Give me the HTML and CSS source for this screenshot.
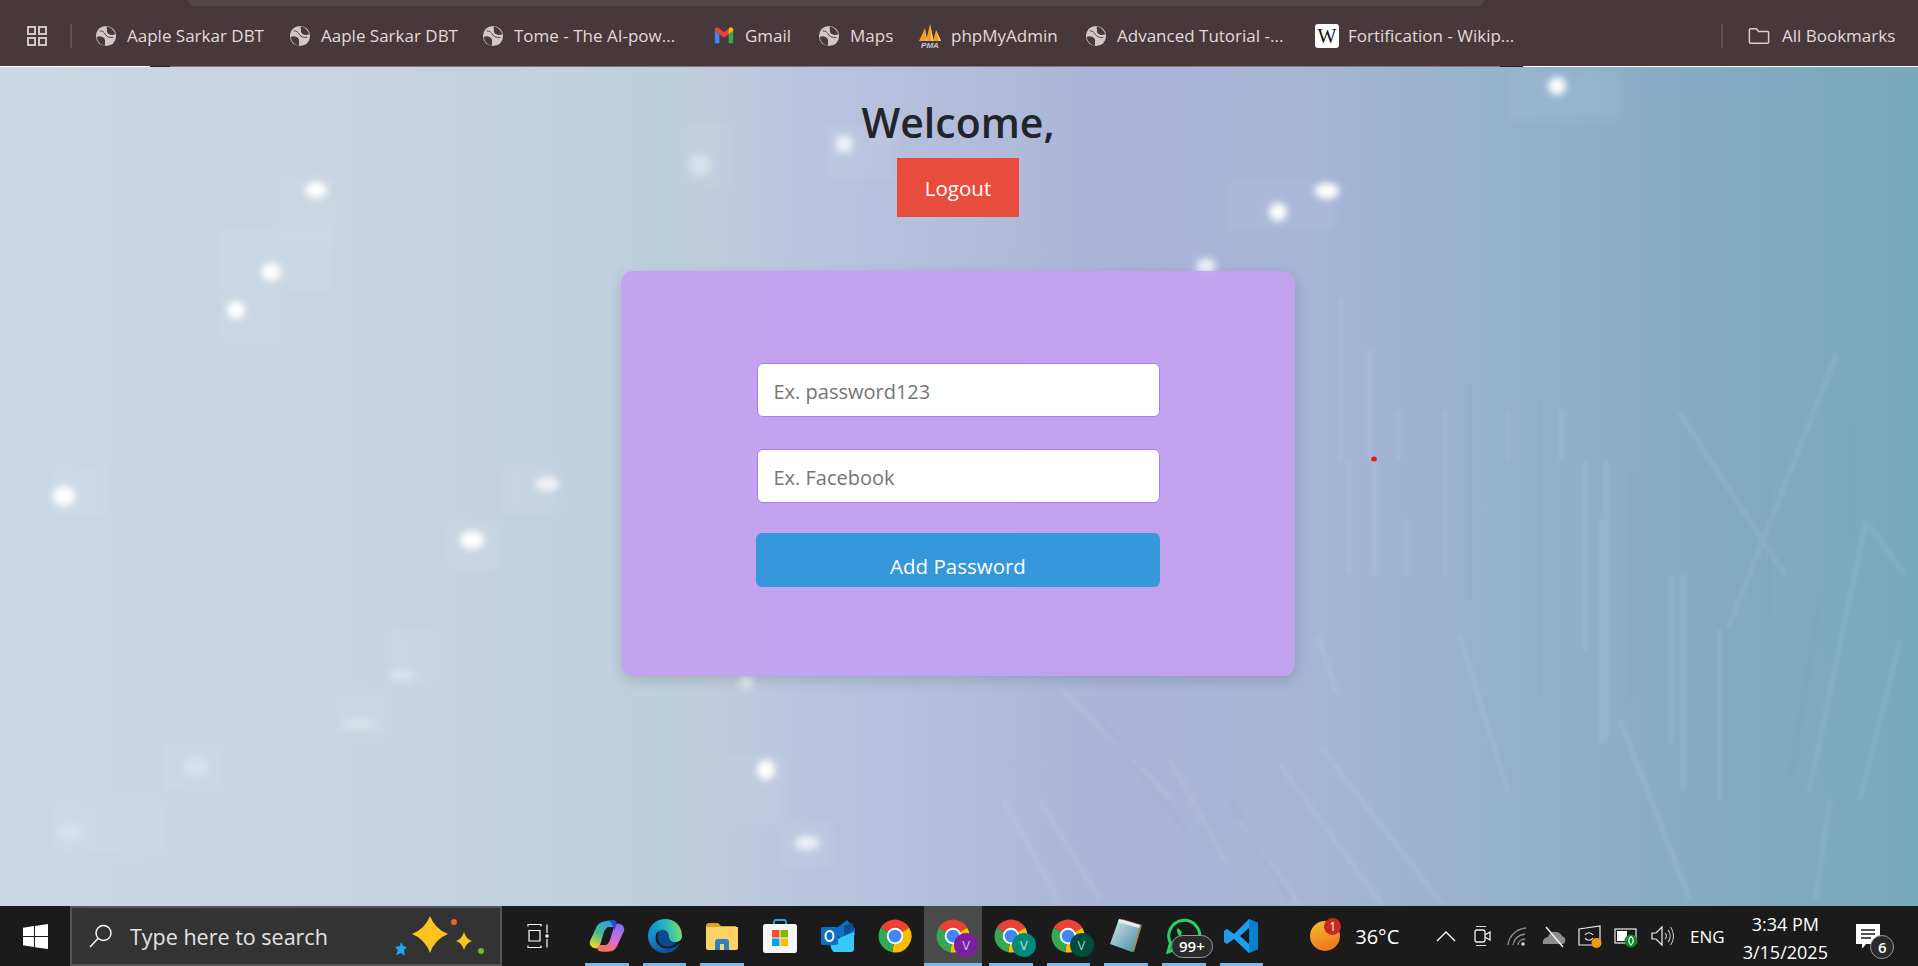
FILE: index.html
```html
<!DOCTYPE html>
<html>
<head>
    <title>Password Manager</title>
    <link rel="stylesheet" href="styles.css">
</head>
<body>
    <!-- shared icons -->
    <svg class="defs" aria-hidden="true">
        <symbol id="globe" viewBox="0 0 24 24">
            <circle cx="12" cy="12" r="11" fill="#cfc9ca"/>
            <path d="M12.5 1.5C17 2 21 5.5 22 10C19 11.5 15 11 13.5 8.5C12.5 6.5 13.5 4 12.5 1.5z" fill="#47383b"/>
            <path d="M2 13C5 11.5 9 12.5 10.5 15C11.5 17.5 10.5 20 11 22.5C6.5 22 2.5 18 2 13z" fill="#47383b"/>
            <path d="M5 6.5C8 6 10 8 11.5 10.5C13 13 16 14 20 13.5" fill="none" stroke="#47383b" stroke-width="1"/>
        </symbol>
        <symbol id="chrome" viewBox="0 0 48 48">
            <path d="M24 24L5 13A22 22 0 0 1 43 13z" fill="#ea4335"/>
            <path d="M24 24L43 13A22 22 0 0 1 20.2 45.7z" fill="#fbbc04"/>
            <path d="M24 24L20.2 45.7A22 22 0 0 1 5 13z" fill="#34a853"/>
            <circle cx="24" cy="24" r="11" fill="#fff"/>
            <circle cx="24" cy="24" r="8.5" fill="#4285f4"/>
        </symbol>
    </svg>

    <header class="top-bar">
        <div class="tab-strip"></div>
        <nav class="bookmarks">
            <svg class="apps-icon" viewBox="0 0 20 20"><path d="M1 1h7v7H1zM12 1h7v7h-7zM1 12h7v7H1zM12 12h7v7h-7z" fill="none" stroke="#cfc6c6" stroke-width="2"/></svg>
            <span class="bar-sep"></span>
            <a class="mark mark-1"><svg class="fav"><use href="#globe"/></svg>Aaple Sarkar DBT</a>
            <a class="mark mark-2"><svg class="fav"><use href="#globe"/></svg>Aaple Sarkar DBT</a>
            <a class="mark mark-3"><svg class="fav"><use href="#globe"/></svg>Tome - The AI-pow...</a>
            <a class="mark mark-4">
                <svg class="fav" viewBox="0 0 24 24">
                    <path d="M2 6v14h5V10z" fill="#4285f4"/>
                    <path d="M22 6v14h-5V10z" fill="#34a853"/>
                    <path d="M2 6l10 8 10-8v-1c0-2-2-3-4-2l-6 5-6-5C4 2 2 3 2 5z" fill="#ea4335"/>
                    <path d="M17 6l1-3c2-1 4 0 4 2v1l-5 4z" fill="#fbbc04"/>
                </svg>Gmail</a>
            <a class="mark mark-5"><svg class="fav"><use href="#globe"/></svg>Maps</a>
            <a class="mark mark-6">
                <svg class="fav fav-pma" viewBox="0 0 24 24">
                    <path d="M1 17L7 4l2 13zM8 17L12 0l3.5 17zM15 17l3-11 5 11z" fill="#f29b26"/>
                    <path d="M12 0l3.5 17h-2zM7 4l2 13H8zM18 6l5 11h-2z" fill="#f9d27c"/>
                    <text class="pma" x="12" y="23.5" text-anchor="middle">PMA</text>
                </svg>phpMyAdmin</a>
            <a class="mark mark-7"><svg class="fav"><use href="#globe"/></svg>Advanced Tutorial -...</a>
            <a class="mark mark-8"><span class="wiki">W</span>Fortification - Wikip...</a>
            <span class="bar-sep bar-sep-right"></span>
            <a class="mark mark-all">
                <svg class="fav" viewBox="0 0 24 24"><path d="M1.5 5.5a1.5 1.5 0 0 1 1.5-1.5h6l2.500 3h9.500a1.500 1.500 0 0 1 1.500 1.500v10a1.500 1.500 0 0 1-1.500 1.500h-18a1.500 1.500 0 0 1-1.500-1.500z" fill="none" stroke="#d8d0d0" stroke-width="1.6"/></svg>All Bookmarks</a>
        </nav>
        <div class="bar-edge"></div>
    </header>

    <main class="page">
        <!-- wallpaper -->
        <svg class="wallpaper" viewBox="0 67 1918 839" aria-hidden="true">
            <defs>
                <linearGradient id="sky" x1="0" x2="1" y1="0" y2="0">
                    <stop offset="0" stop-color="#ccd9e5"/>
                    <stop offset=".06" stop-color="#c9d6e2"/>
                    <stop offset=".2" stop-color="#c7d3df"/>
                    <stop offset=".32" stop-color="#bfd0de"/>
                    <stop offset=".35" stop-color="#bccfdc"/>
                    <stop offset=".37" stop-color="#c0cbdc"/>
                    <stop offset=".42" stop-color="#b9c5de"/>
                    <stop offset=".58" stop-color="#abb4d9"/>
                    <stop offset=".68" stop-color="#a6b5d6"/>
                    <stop offset=".78" stop-color="#96b1cd"/>
                    <stop offset=".91" stop-color="#82aac2"/>
                    <stop offset="1" stop-color="#78a8bb"/>
                </linearGradient>
                <filter id="soft"><feGaussianBlur stdDeviation="3.5"/></filter>
                <filter id="haze"><feGaussianBlur stdDeviation="1.8"/></filter>
            </defs>
            <rect x="0" y="67" width="1918" height="839" fill="url(#sky)"/>
            <g fill="#fff" fill-opacity=".06" filter="url(#soft)">
                <rect x="280" y="176" width="56" height="70"/><rect x="222" y="230" width="110" height="60"/>
                <rect x="222" y="296" width="56" height="45"/><rect x="52" y="465" width="56" height="52"/>
                <rect x="445" y="520" width="56" height="50"/><rect x="502" y="465" width="56" height="50"/>
                <rect x="388" y="630" width="50" height="55"/><rect x="335" y="690" width="55" height="45"/>
                <rect x="165" y="745" width="55" height="45"/><rect x="55" y="800" width="110" height="55"/>
                <rect x="1510" y="70" width="110" height="50"/><rect x="1230" y="180" width="105" height="50"/>
                <rect x="680" y="125" width="50" height="60"/><rect x="826" y="125" width="70" height="55"/>
                <rect x="728" y="756" width="56" height="68"/><rect x="782" y="822" width="50" height="45"/>
            </g>
            <g fill="#fff" filter="url(#soft)">
                <ellipse cx="316" cy="190" rx="11" ry="8"/><ellipse cx="271" cy="272" rx="10" ry="9"/>
                <ellipse cx="236" cy="310" rx="9" ry="9"/><ellipse cx="64" cy="496" rx="11" ry="10"/>
                <ellipse cx="472" cy="540" rx="12" ry="9"/><ellipse cx="547" cy="484" rx="12" ry="7" fill-opacity=".75"/>
                <ellipse cx="1557" cy="86" rx="9" ry="9"/><ellipse cx="1327" cy="191" rx="12" ry="8"/>
                <ellipse cx="1278" cy="212" rx="9" ry="9"/><ellipse cx="766" cy="770" rx="9" ry="10"/>
                <ellipse cx="807" cy="843" rx="12" ry="7" fill-opacity=".75"/><ellipse cx="844" cy="144" rx="9" ry="9" fill-opacity=".75"/>
                <ellipse cx="1206" cy="267" rx="10" ry="9" fill-opacity=".8"/><ellipse cx="746" cy="682" rx="8" ry="6" fill-opacity=".6"/>
                <ellipse cx="700" cy="165" rx="11" ry="11" fill-opacity=".35"/><ellipse cx="635" cy="312" rx="9" ry="12" fill-opacity=".35"/>
                <ellipse cx="740" cy="567" rx="9" ry="9" fill-opacity=".3"/><ellipse cx="402" cy="675" rx="12" ry="6" fill-opacity=".3"/>
                <ellipse cx="359" cy="724" rx="18" ry="6" fill-opacity=".25"/><ellipse cx="196" cy="767" rx="12" ry="10" fill-opacity=".25"/>
                <ellipse cx="71" cy="832" rx="12" ry="9" fill-opacity=".2"/>
            </g>
            <g stroke="#fff" stroke-opacity=".07" stroke-width="5" fill="none" filter="url(#haze)">
                <path d="M1341 298V461M1370 350V461M1398 410V461M1445 410V575M1508 410V461M1561 410V461"/>
                <path d="M1349 461V575M1374 461V575M1406 520V575M1585 461V650M1606 461V740"/>
                <path d="M1601 520V743M1671 575V743M1683 575V790M1720 630V800"/>
                <path d="M1866 521L1809 792M1866 521L1905 575M1837 353L1728 629M1679 412L1785 575"/>
                <path d="M1459 634L1508 792M1317 634L1337 694M1620 720L1690 900M1900 640L1860 800M1830 800L1815 900"/>
                <path d="M1280 765L1382 905M1321 748L1443 905M1240 820L1300 905"/>
                <path d="M1060 687L1170 797M1170 760L1225 860M1003 800L1060 903M1040 800L1100 900"/>
            </g>
            <g stroke="#5f7f9c" stroke-opacity=".05" stroke-width="5" fill="none" filter="url(#haze)">
                <path d="M1470 380V600M1540 400V700M1630 470V700M1770 480V620M1820 600L1790 780M1850 420V540"/>
                <path d="M1100 720L1185 830M1230 800L1290 900"/>
            </g>
            <ellipse cx="1374" cy="459" rx="2.8" ry="2.5" fill="#e8141c"/>
        </svg>

        <h1 class="welcome">Welcome,</h1>
        <button class="logout-btn">Logout</button>

        <form class="pass-card">
            <input class="pass-input" type="text" placeholder="Ex. password123">
            <input class="pass-input" type="text" placeholder="Ex. Facebook">
            <button class="add-btn" type="button">Add Password</button>
        </form>
    </main>

    <footer class="taskbar">
        <div class="start">
            <svg class="start-icon" viewBox="0 0 24 24"><path d="M0 3.5L10.5 2V11.5H0zM11.5 1.8L24 0V11.5H11.5zM0 12.5H10.5V22L0 20.5zM11.5 12.5H24V24L11.5 22.2z" fill="#fff"/></svg>
        </div>
        <div class="search">
            <svg class="search-icon" viewBox="0 0 24 24"><circle cx="14.5" cy="9" r="7.5" fill="none" stroke="#fff" stroke-width="1.4"/><path d="M9 14.5L1 23" stroke="#fff" stroke-width="1.4"/></svg>
            <span class="search-text">Type here to search</span>
            <svg class="sparkles" viewBox="0 0 90 44">
                <path d="M36 2Q41 15 54 20Q41 25 36 39Q31 25 18 20Q31 15 36 2z" fill="#fdc41f"/>
                <path d="M70 18Q72 25 78 27Q72 29 70 36Q68 29 62 27Q68 25 70 18z" fill="#fdc41f"/>
                <path d="M7 28l2 4 4 1-3 3 1 6-4-3-5 2 2-5-3-3 5-1z" fill="#1ea7f2"/>
                <circle cx="60" cy="8" r="3" fill="#f0651f"/>
                <circle cx="87" cy="37" r="3" fill="#7db33a"/>
            </svg>
        </div>
        <div class="task-view">
            <svg class="task-view-icon" viewBox="0 0 24 24"><path d="M1 2.5V.5H14V2.5M1 21.5V23.5H14V21.5M2 6.5H13V17H2zM20 .5V9M20 15V23.5" fill="none" stroke="#fff" stroke-width="1.2"/><rect x="18.5" y="10.5" width="3" height="3" fill="#fff"/></svg>
        </div>

        <div class="apps">
            <div class="app on">
                <svg class="app-icon" viewBox="0 0 36 36">
                    <defs>
                        <linearGradient id="cp1" x1=".7" y1="0" x2=".2" y2="1"><stop offset="0" stop-color="#2f9df0"/><stop offset=".5" stop-color="#3fc08a"/><stop offset="1" stop-color="#f6d72f"/></linearGradient>
                        <linearGradient id="cp2" x1=".7" y1="0" x2=".3" y2="1"><stop offset="0" stop-color="#8a6cf0"/><stop offset=".55" stop-color="#d86fd8"/><stop offset="1" stop-color="#f8744a"/></linearGradient>
                    </defs>
                    <path d="M13 4C15 3 24 2 26 3C28 4 28 8 25 9L20 9C18 9 16 11 15 14L11 27C10 30 8 31 5 30C2 29 0 26 1 23L7 10C8 7 10 5 13 4z" fill="url(#cp1)"/>
                    <path d="M23 33C21 34 12 34 10 33C8 32 8 28 11 27L16 27C18 27 20 25 21 22L25 9C26 6 28 5 31 6C34 7 36 10 35 13L29 26C28 29 26 32 23 33z" fill="url(#cp2)"/>
                    <path d="M20 3L24 2.5C27 2.5 28 5 27.5 7L25 13C24.5 9 23 5 20 3z" fill="#1f4fd0"/>
                </svg>
            </div>
            <div class="app on">
                <svg class="app-icon" viewBox="0 0 36 36">
                    <defs>
                        <linearGradient id="ed1" x1="0" y1=".6" x2="1" y2=".5"><stop offset="0" stop-color="#0f86c8"/><stop offset=".55" stop-color="#27b8c0"/><stop offset="1" stop-color="#7ce06a"/></linearGradient>
                        <linearGradient id="ed2" x1="0" y1="0" x2=".7" y2="1"><stop offset="0" stop-color="#1f9be0"/><stop offset="1" stop-color="#0b4f96"/></linearGradient>
                    </defs>
                    <path d="M18 1C28 1 35 8 35 18C35 22 32 24 28 24C24 24 22 22 22 19C22 15 18 12 13 13C7 14 2 19 1 18C1 8 9 1 18 1z" fill="url(#ed1)"/>
                    <path d="M1 18C3 12 9 10 14 12C9 13 8 18 9 23C11 29 18 32 25 30C29 29 31 27 33 25C30 32 24 35 18 35C8 35 1 27 1 18z" fill="url(#ed2)"/>
                    <path d="M14 12C18 11 22 14 22 19C21 23 25 25 29 24C27 28 21 30 16 28C11 25 8 16 14 12z" fill="#0a4a92"/>
                </svg>
            </div>
            <div class="app on">
                <svg class="app-icon" viewBox="0 0 36 36">
                    <path d="M2 8c0-2 1-3 3-3h9l3 3h15v8H2z" fill="#e0a01f"/>
                    <path d="M2 9h32v21c0 1-1 2-2 2H4c-1 0-2-1-2-2z" fill="#fdd367"/>
                    <path d="M11 32V24c0-2 1-3 3-3h8c2 0 3 1 3 3v8h-5v-6h-4v6z" fill="#2f7fc4"/>
                </svg>
            </div>
            <div class="app">
                <svg class="app-icon" viewBox="0 0 36 36">
                    <path d="M12 8V4c0-1 1-2 2-2h8c1 0 2 1 2 2v4" fill="none" stroke="#2ba8e8" stroke-width="1.8"/>
                    <rect x="1" y="6" width="34" height="29" rx="2.5" fill="#f6f6f6"/>
                    <rect x="10" y="12" width="7.5" height="7.5" fill="#f25022"/><rect x="18.5" y="12" width="7.5" height="7.5" fill="#7fba00"/>
                    <rect x="10" y="20.5" width="7.5" height="7.5" fill="#00a4ef"/><rect x="18.5" y="20.5" width="7.5" height="7.5" fill="#ffb900"/>
                </svg>
            </div>
            <div class="app">
                <svg class="app-icon" viewBox="0 0 36 36">
                    <path d="M14 12L27 2l8 9v6l-12 7z" fill="#0f6fc6"/>
                    <path d="M24 8l8-3 3 6-11 7z" fill="#0a4f96"/>
                    <path d="M10 24l24-10v17c0 2-1 3-3 3H15c-2 0-3-2-4-4z" fill="#38c8f5"/>
                    <rect x="1" y="9" width="17" height="18" rx="2" fill="#0f6fc6"/>
                    <ellipse cx="9.5" cy="18" rx="4" ry="5" fill="none" stroke="#fff" stroke-width="2"/>
                </svg>
            </div>
            <div class="app"><svg class="app-icon"><use href="#chrome"/></svg></div>
            <div class="app on active"><svg class="app-icon"><use href="#chrome"/></svg><span class="profile profile-purple">V</span></div>
            <div class="app on"><svg class="app-icon"><use href="#chrome"/></svg><span class="profile profile-teal">V</span></div>
            <div class="app on"><svg class="app-icon"><use href="#chrome"/></svg><span class="profile profile-dark">V</span></div>
            <div class="app on">
                <svg class="app-icon" viewBox="0 0 36 36">
                    <defs>
                        <linearGradient id="np" x1="0" y1="0" x2="1" y2="1"><stop offset="0" stop-color="#d6e8ee"/><stop offset="1" stop-color="#3f8aa0"/></linearGradient>
                    </defs>
                    <path d="M14 1l20 6-8 27-3-1z" fill="#9c8a52"/>
                    <path d="M11 1l21 6-8 27L2 26z" fill="url(#np)"/>
                    <path d="M11 1l21 6-1 3-21-6z" fill="#e9eef0"/>
                </svg>
            </div>
            <div class="app on">
                <svg class="app-icon" viewBox="0 0 36 36"><path d="M2 34l2.5-9A15.500 15.500 0 1 1 10 31z" fill="none" stroke="#25d366" stroke-width="3"/><path d="M12 10c-2 2-1 6 3 10s7 5 9 3l-3-4-2 1c-2-1-3-3-4-4l1-2z" fill="#25d366"/></svg>
                <span class="count-badge">99+</span>
            </div>
            <div class="app on">
                <svg class="app-icon" viewBox="0 0 36 36">
                    <path d="M26 1l9 4v26l-9 4-15-14-7 5-3-2V13l3-2 7 5zM26 10l-9 8 9 8z" fill="#1f9cf0"/>
                    <path d="M26 1l9 4v26l-9 4z" fill="#0b7fcf"/>
                </svg>
            </div>
        </div>

        <div class="weather">
            <span class="sun"><span class="sun-badge">1</span></span>
            <span class="temp">36°C</span>
        </div>

        <div class="tray">
            <svg class="tray-icon" viewBox="0 0 24 24"><path d="M3 17L12 8l9 9" fill="none" stroke="#fff" stroke-width="1.4"/></svg>
            <svg class="tray-icon" viewBox="0 0 24 24"><path d="M6 2.5h10M6 21.5h10" stroke="#ddd" fill="none"/><rect x="5" y="6" width="10" height="12" rx="2" fill="none" stroke="#eee" stroke-width="1.3"/><path d="M15 11l5-3v8l-5-3" fill="none" stroke="#eee" stroke-width="1.3"/></svg>
            <svg class="tray-icon" viewBox="0 0 24 24"><path d="M2 21C3 12 10 5 20 4M7 21c1-6 5-10 12-11M12 21c0-3 3-6 7-6" fill="none" stroke="#8c8c8c" stroke-width="1.3"/><circle cx="17" cy="20" r="1.7" fill="#ddd"/></svg>
            <svg class="tray-icon" viewBox="0 0 24 24"><path d="M1 20c-1-4 2-7 5-7 1-4 5-6 8-5 3 0 5 2 6 4 3 1 4 3 3 6-1 2-2 2-3 2z" fill="#8d8d8d"/><path d="M4 3l17 20" stroke="#f2f2f2" stroke-width="1.5"/></svg>
            <svg class="tray-icon" viewBox="0 0 24 24"><path d="M1 5L22 2v19H1z" fill="none" stroke="#eee" stroke-width="1.2"/><path d="M7 11c2-3 6-3 8 0M15 14c-2 3-6 3-8 0" fill="none" stroke="#eee" stroke-width="1.2"/><circle cx="18.5" cy="19" r="5" fill="#f59a0c"/></svg>
            <svg class="tray-icon" viewBox="0 0 24 24"><rect x="1" y="5" width="21" height="14" fill="none" stroke="#eee" stroke-width="1.2"/><rect x="3" y="7" width="10" height="10" fill="#fff"/><circle cx="17" cy="17" r="6.5" fill="#0c8a2c"/><path d="M17 12.5c3 2 3 6 0 8.5-3-2.5-3-6.5 0-8.5z" fill="none" stroke="#fff" stroke-width="1.2"/></svg>
            <svg class="tray-icon" viewBox="0 0 24 24"><path d="M2 9h4l6-6v18l-6-6H2z" fill="none" stroke="#eee" stroke-width="1.2"/><path d="M15 9c2 2 2 4 0 6M18 6c3 3 3 9 0 12M20.5 3c4 5 4 13 0 18" fill="none" stroke="#bbb" stroke-width="1.1"/></svg>
        </div>
        <span class="lang">ENG</span>
        <div class="clock"><span>3:34 PM</span><span>3/15/2025</span></div>
        <div class="notify">
            <svg class="notify-icon" viewBox="0 0 24 24"><path d="M0 0H24V20H10L6 25V20H0z" fill="#fff"/><path d="M5 6H19M5 10H19M5 14H15" stroke="#1b1b1b" stroke-width="1.5"/></svg>
            <span class="notify-count">6</span>
        </div>
    </footer>
</body>
</html>
```

FILE: styles.css
```css
/* Base */
html, body {
    margin: 0;
    height: 966px;
    overflow: hidden;
}

body {
    display: flex;
    flex-direction: column;
    font-family: "Open Sans", "Noto Sans", sans-serif;
}

.defs {
    width: 0;
    height: 0;
    display: block;
}

/* Browser bookmarks bar */
.top-bar {
    background-color: #47383b;
    flex-shrink: 0;
}

.tab-strip {
    height: 6px;
    margin: 0 433px 0 187px;
    background-color: #524747;
    clip-path: polygon(0 0, 100% 0, 99.6% 100%, 0.4% 100%);
}

.bookmarks {
    height: 60px;
    display: flex;
    align-items: center;
    padding-left: 27px;
    color: #e2dada;
    font-size: 17px;
    line-height: 22px;
    white-space: nowrap;
}

.apps-icon {
    width: 20px;
    height: 20px;
}

.bar-sep {
    width: 2px;
    height: 24px;
    margin-left: 23px;
    background-color: #5f5154;
}

.bar-sep-right {
    margin-left: 0;
}

.mark {
    display: flex;
    align-items: center;
    gap: 10px;
    margin-bottom: 1px;
}

.fav {
    width: 22px;
    height: 22px;
    flex-shrink: 0;
}

.fav-pma {
    width: 24px;
    height: 24px;
    margin-right: -1px;
}

.pma {
    font-family: "Liberation Sans", sans-serif;
    font-size: 8px;
    font-weight: bold;
    font-style: italic;
    fill: #c9c9dd;
}

.wiki {
    width: 24px;
    height: 24px;
    margin-left: -1px;
    margin-right: -1px;
    border-radius: 3px;
    background-color: #fff;
    color: #111;
    font-family: "Liberation Serif", serif;
    font-size: 20px;
    line-height: 24px;
    text-align: center;
    flex-shrink: 0;
}

/* each bookmark keeps its slot on the bar */
.mark-1 { margin-left: 23px; width: 194px; }
.mark-2 { width: 193px; }
.mark-3 { width: 231px; }
.mark-4 { width: 105px; }
.mark-5 { width: 100px; }
.mark-6 { width: 167px; }
.mark-7 { width: 231px; }
.mark-8 { width: 405px; }
.mark-all { margin-left: 25px; gap: 12px; }

.bar-edge {
    height: 1px;
    background: linear-gradient(90deg, #fff 150px, #222 150px, #222 170px, #7d7580 170px, #7d7580 1500px, #222 1500px, #222 1523px, #fff 1523px);
}

/* Page */
.page {
    position: relative;
    flex: 1;
    display: flex;
    flex-direction: column;
    align-items: center;
    overflow: hidden;
    padding: 31px 2px 0 0;
    box-sizing: border-box;
}

.wallpaper {
    position: absolute;
    top: 0;
    left: 0;
    width: 100%;
    height: 100%;
}

.welcome {
    position: relative;
    margin: 0 0 12px;
    color: #212529;
    font-size: 41px;
    font-weight: 600;
    line-height: 48px;
}

.logout-btn {
    position: relative;
    width: 122px;
    height: 59px;
    border: none;
    background-color: #e74c3c;
    color: #fff;
    font-family: inherit;
    font-size: 20.5px;
}

.pass-card {
    position: relative;
    width: 674px;
    height: 405px;
    margin-top: 54px;
    padding-top: 92px;
    box-sizing: border-box;
    display: flex;
    flex-direction: column;
    align-items: center;
    border-radius: 12px;
    background-color: rgba(196, 160, 240, 0.93);
    box-shadow: 0 4px 14px rgba(0, 0, 0, 0.14);
}

.pass-input {
    width: 403px;
    height: 54px;
    margin-bottom: 32px;
    padding: 2px 16px 0;
    box-sizing: border-box;
    border: 1px solid #a97ff0;
    border-radius: 6px;
    background-color: #fff;
    font-family: inherit;
    font-size: 20px;
}

.pass-input::placeholder {
    color: #757575;
}

.add-btn {
    width: 404px;
    height: 54px;
    margin-top: -2px;
    padding-top: 13px;
    border: none;
    border-radius: 6px;
    background-color: #3498db;
    color: #fff;
    font-family: inherit;
    font-size: 20.5px;
}

/* Windows taskbar */
.taskbar {
    height: 60px;
    flex-shrink: 0;
    display: flex;
    align-items: center;
    background-color: #1b1b1b;
    color: #fff;
}

.start {
    width: 70px;
    display: flex;
    justify-content: center;
}

.start-icon {
    width: 25px;
    height: 25px;
}

.search {
    width: 432px;
    height: 60px;
    box-sizing: border-box;
    display: flex;
    align-items: center;
    padding-left: 17px;
    border: 2px solid #555;
    background-color: #333;
    font-size: 21.5px;
}

.search-icon {
    width: 24px;
    height: 24px;
}

.search-text {
    margin-left: 17px;
    color: #e4e4e4;
}

.sparkles {
    width: 90px;
    height: 44px;
    margin-left: auto;
    margin-right: 16px;
}

.task-view {
    width: 76px;
    display: flex;
    justify-content: center;
}

.task-view-icon {
    width: 24px;
    height: 24px;
    margin-right: 2px;
}

.apps {
    display: flex;
    height: 60px;
}

.app {
    position: relative;
    width: 57.7px;
    height: 60px;
    display: flex;
    align-items: center;
    justify-content: center;
}

.app-icon {
    width: 36px;
    height: 36px;
}

.app.active {
    background-color: #4a4a4a;
}

/* running indicator */
.app.on::after {
    content: "";
    position: absolute;
    bottom: 0;
    left: 7px;
    right: 7px;
    height: 3px;
    background-color: #76b9ed;
}

.app.active::after {
    left: 0;
    right: 0;
}

.profile {
    position: absolute;
    top: 27px;
    left: 30px;
    width: 24px;
    height: 24px;
    border-radius: 50%;
    font-size: 13px;
    line-height: 24px;
    text-align: center;
}

.profile-purple { background-color: #7b1fa2; color: #d8b8e8; }
.profile-teal { background-color: #00897b; color: #bfe6e0; }
.profile-dark { background-color: #004d40; color: #a8c8c2; }

.count-badge {
    position: absolute;
    top: 29px;
    left: 16px;
    width: 42px;
    height: 23px;
    box-sizing: border-box;
    border: 1px solid #999;
    border-radius: 12px;
    background-color: #2a2a2a;
    font-size: 15px;
    font-weight: 600;
    line-height: 21px;
    text-align: center;
}

.weather {
    display: flex;
    align-items: center;
    margin-left: 40px;
}

.sun {
    position: relative;
    width: 30px;
    height: 30px;
    border-radius: 50%;
    background: linear-gradient(160deg, #f5c22f, #ee6a1a);
}

.sun-badge {
    position: absolute;
    top: -3px;
    left: 14px;
    width: 17px;
    height: 17px;
    border-radius: 50%;
    background-color: #c42b1c;
    font-size: 12px;
    line-height: 17px;
    text-align: center;
}

.temp {
    margin-left: 15px;
    font-size: 20px;
}

.tray {
    display: flex;
    margin-left: 29px;
}

.tray-icon {
    width: 24px;
    height: 24px;
    padding: 0 6px;
}

.lang {
    width: 54px;
    text-align: center;
    font-size: 17px;
}

.clock {
    width: 102px;
    display: flex;
    flex-direction: column;
    align-items: center;
    padding-top: 3px;
    font-size: 18px;
    line-height: 28px;
}

.notify {
    position: relative;
    width: 64px;
    height: 60px;
    display: flex;
    align-items: center;
    justify-content: center;
}

.notify-icon {
    width: 24px;
    height: 24px;
}

.notify-count {
    position: absolute;
    top: 29px;
    left: 34px;
    width: 24px;
    height: 24px;
    box-sizing: border-box;
    border: 1px solid #999;
    border-radius: 50%;
    background-color: #2a2a2a;
    font-size: 15px;
    font-weight: 600;
    line-height: 22px;
    text-align: center;
}
```
